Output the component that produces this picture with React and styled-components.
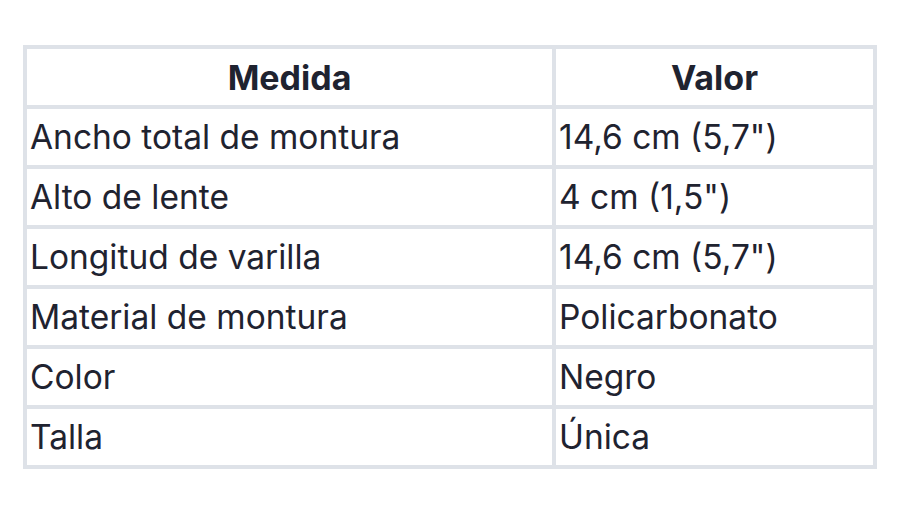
import React from "react";
import styled, { createGlobalStyle } from "styled-components";

const Global = createGlobalStyle`
  html, body { margin: 0; padding: 0; background: #ffffff; }
  body { font-family: Inter, "Noto Sans", sans-serif; }
`;

const Page = styled.div`
  width: 900px;
  height: 524px;
  padding: 45px 23px 0 23px;
  box-sizing: border-box;
  background: #ffffff;
`;

const Table = styled.table`
  width: 854px;
  border-collapse: collapse;
  border: 4px solid #dee2e8;
  table-layout: fixed;
  color: #1f2330;
  font-family: Inter, "Noto Sans", sans-serif;
  font-size: 33.5px;
`;

const Th = styled.th`
  border: 4px solid #dee2e8;
  height: 56px;
  padding: 0 3px;
  font-weight: 700;
  font-size: 34px;
  text-align: center;
`;

const Td = styled.td`
  border: 4px solid #dee2e8;
  height: 56px;
  padding: 0 3px;
  font-weight: 400;
  text-align: left;
  white-space: nowrap;
`;

const rows = [
  ["Ancho total de montura", "14,6 cm (5,7\")"],
  ["Alto de lente", "4 cm (1,5\")"],
  ["Longitud de varilla", "14,6 cm (5,7\")"],
  ["Material de montura", "Policarbonato"],
  ["Color", "Negro"],
  ["Talla", "Única"],
];

export default function App() {
  return (
    <>
      <Global />
      <Page>
        <Table>
          <colgroup>
            <col style={{ width: "529px" }} />
            <col />
          </colgroup>
          <thead>
            <tr>
              <Th>Medida</Th>
              <Th>Valor</Th>
            </tr>
          </thead>
          <tbody>
            {rows.map(([k, v]) => (
              <tr key={k}>
                <Td>{k}</Td>
                <Td>{v}</Td>
              </tr>
            ))}
          </tbody>
        </Table>
      </Page>
    </>
  );
}
